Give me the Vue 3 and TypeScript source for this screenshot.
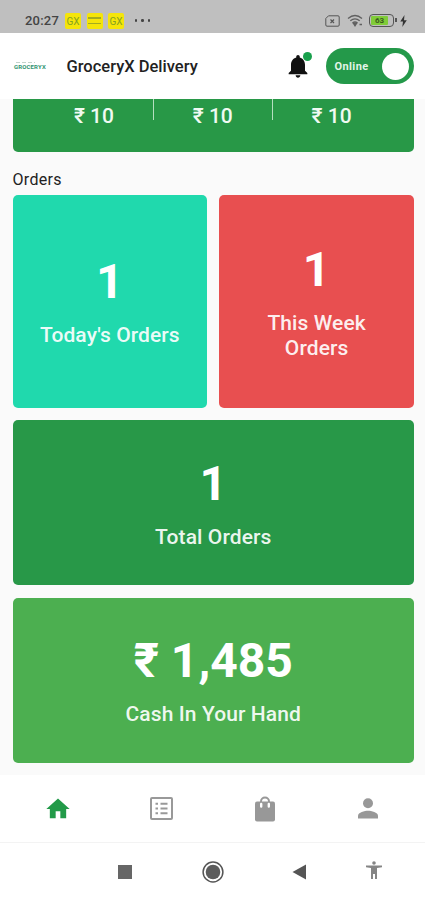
<script setup lang="ts">
import { ref } from 'vue'

interface OrderCard {
  value: string
  label: string
  tone: string
}

const earnings: string[] = ['₹ 10', '₹ 10', '₹ 10']
const cards: OrderCard[] = [
  { value: '1', label: "Today's Orders", tone: 'teal' },
  { value: '1', label: 'This Week Orders', tone: 'red' },
  { value: '1', label: 'Total Orders', tone: 'green wide' },
  { value: '₹ 1,485', label: 'Cash In Your Hand', tone: 'light wide' },
]
const online = ref(true)
</script>

<template>
  <div class="screen">
    <div class="status">
      <span class="time">20:27</span>
      <span class="badge">GX</span>
      <span class="badge lines"><i></i><i></i></span>
      <span class="badge">GX</span>
      <span class="dots"><i></i><i></i><i></i></span>
      <span class="status-right">
        <svg width="15" height="12" viewBox="0 0 15 12" fill="none" stroke="#555">
          <path d="M3.5 .8H13a1.2 1.2 0 0 1 1.2 1.2v8A1.2 1.2 0 0 1 13 11.2H2A1.2 1.2 0 0 1 .8 10V3.5z" />
          <path d="M5.5 4.5l3.5 3.5M9 4.5L5.5 8" stroke-width="1.2" />
        </svg>
        <svg class="wifi" width="17" height="13" viewBox="0 0 17 13" fill="none" stroke="#606060" stroke-width="1.3">
          <path d="M1 4.5Q8 -1.5 15 4.5M3.3 6.8Q8 2.8 12.7 6.8M5.5 9Q8 7 10.5 9" />
          <path d="M6.5 9.5h3L8 11.8zM12.5 10.5h2.5" fill="#606060" />
        </svg>
        <span class="battery"><b>63</b></span>
        <svg class="bolt" width="7" height="12" viewBox="0 0 7 12"><path d="M4.5 0L.3 6.6H3L2.3 12 6.8 5.2H4z" fill="#333" /></svg>
      </span>
    </div>

    <header class="header">
      <div class="logo"><i class="tagline"></i><span>GROCERYX</span></div>
      <h1>GroceryX Delivery</h1>
      <div class="bell">
        <svg width="28" height="28" viewBox="0 0 24 24" fill="#111">
          <path d="M12 22c1.1 0 2-.9 2-2h-4c0 1.1.9 2 2 2zm6-6v-5c0-3.07-1.64-5.64-4.5-6.32V4c0-.83-.67-1.5-1.5-1.5s-1.5.67-1.5 1.5v.68C7.63 5.36 6 7.92 6 11v5l-2 2v1h16v-1l-2-2z" />
        </svg>
        <i class="dot"></i>
      </div>
      <button class="toggle" :class="{ off: !online }" @click="online = !online">
        <span>Online</span><i class="knob"></i>
      </button>
    </header>

    <main class="content">
      <section class="earnings">
        <div v-for="(amount, i) in earnings" :key="i" class="amount">{{ amount }}</div>
      </section>
      <h2>Orders</h2>
      <section class="grid">
        <article v-for="card in cards" :key="card.label" class="card" :class="card.tone">
          <strong>{{ card.value }}</strong>
          <span>{{ card.label }}</span>
        </article>
      </section>
    </main>

    <nav class="tabs">
      <a>
        <svg width="28" height="28" viewBox="0 0 24 24" fill="#229a48"><path d="M10 20v-6h4v6h5v-8h3L12 3 2 12h3v8z" /></svg>
      </a>
      <a>
        <svg width="23" height="23" viewBox="0 0 23 23" fill="none" stroke="#999">
          <rect x="1" y="1" width="21" height="21" rx="1" stroke-width="2" />
          <path d="M5.5 6.7h2.5M5.500 11.500h2.500M5.500 16.300h2.500M10.500 6.700h7M10.500 11.500h7M10.500 16.300h7" stroke-width="1.900" />
        </svg>
      </a>
      <a>
        <svg width="20" height="26" viewBox="0 0 20 26">
          <rect x="0" y="5.500" width="20" height="20" rx="2" fill="#989898" />
          <path d="M6 7V5.500a4 4 0 0 1 8 0V7" fill="none" stroke="#989898" stroke-width="2" />
          <path d="M6.200 8v2.500M13.800 8v2.500" stroke="#fff" stroke-width="2.400" stroke-linecap="round" />
        </svg>
      </a>
      <a>
        <svg width="20" height="21" viewBox="0 0 20 21" fill="#989898">
          <circle cx="10" cy="5.200" r="5" />
          <path d="M0 20.500v-2.800c0-3.300 6.700-5 10-5s10 1.700 10 5v2.800z" />
        </svg>
      </a>
    </nav>

    <footer class="system">
      <svg width="14" height="14" viewBox="0 0 14 14"><rect width="14" height="14" fill="#666" /></svg>
      <svg width="22" height="22" viewBox="0 0 22 22">
        <circle cx="11" cy="11" r="9.900" fill="none" stroke="#555" stroke-width="1.500" />
        <circle cx="11" cy="11" r="7.300" fill="#5c5c5c" />
      </svg>
      <svg width="14" height="16" viewBox="0 0 14 16"><path d="M14 .5v15L.5 8z" fill="#555" /></svg>
      <svg class="access" width="16" height="18" viewBox="0 0 16 18" fill="#858585">
        <circle cx="8" cy="2" r="1.800" />
        <path d="M0 4.500h16v1.800l-5 .7v11H9v-5H7v5H5V7L0 6.300z" />
      </svg>
    </footer>
  </div>
</template>

<style>
body {
  margin: 0;
}
</style>

<style scoped>
* {
  box-sizing: border-box;
}
.screen {
  width: 425px;
  height: 900px;
  display: flex;
  flex-direction: column;
  overflow: hidden;
  background: #fff;
  font-family: Roboto, "Liberation Sans", sans-serif;
}
.status {
  height: 33px;
  flex: none;
  display: flex;
  align-items: center;
  padding: 8px 18px 0 25px;
  background: #bfbfbf;
}
.time {
  width: 40px;
  font-size: 13px;
  font-weight: 500;
  letter-spacing: 0.2px;
  color: #444;
}
.badge {
  width: 16px;
  height: 16px;
  margin-right: 5.5px;
  border-radius: 2px;
  background: #f5e50a;
  color: #85a321;
  font-size: 10px;
  line-height: 17px;
  text-align: center;
}
.lines {
  display: flex;
  flex-direction: column;
  align-items: center;
  justify-content: center;
  gap: 4px;
}
.lines i {
  width: 13px;
  height: 1.5px;
  background: #a4ac20;
}
.dots {
  display: flex;
  gap: 4px;
  margin-left: 5px;
}
.dots i {
  width: 2.5px;
  height: 2.5px;
  border-radius: 50%;
  background: #444;
}
.status-right {
  display: flex;
  align-items: center;
  margin-left: auto;
}
.wifi {
  margin-left: 7px;
}
.battery {
  position: relative;
  width: 25px;
  height: 13px;
  margin-left: 5px;
  padding: 1px;
  border: 1.5px solid #555;
  border-radius: 4px;
}
.battery::after {
  content: "";
  position: absolute;
  right: -4px;
  top: 3px;
  width: 2px;
  height: 4px;
  background: #555;
}
.battery b {
  display: block;
  width: 17px;
  height: 9px;
  border-radius: 1px;
  background: #80cc38;
  color: #3c5d1d;
  font-size: 8px;
  line-height: 9px;
  text-align: center;
}
.bolt {
  margin-left: 6px;
}
.header {
  height: 66px;
  flex: none;
  display: flex;
  align-items: center;
  padding: 0 11px 0 14px;
}
.logo {
  width: 52.5px;
  display: flex;
  flex-direction: column;
  gap: 1px;
  color: #2f9470;
  font-size: 6px;
  font-weight: 700;
  line-height: 6px;
  letter-spacing: 0.15px;
}
.tagline {
  width: 19px;
  height: 1px;
  margin-left: 2px;
  background: repeating-linear-gradient(90deg, #c3d3cc 0 4px, transparent 4px 6px);
}
h1 {
  margin: 0;
  font-size: 16.5px;
  font-weight: 500;
  color: #222;
}
.bell {
  position: relative;
  width: 28px;
  height: 28px;
  margin-left: auto;
}
.dot {
  position: absolute;
  top: 0;
  right: 0;
  width: 9px;
  height: 9px;
  border-radius: 50%;
  background: #18a04c;
}
.toggle {
  width: 88.5px;
  height: 36px;
  margin-left: 14px;
  padding: 0 5px 0 9px;
  display: flex;
  align-items: center;
  justify-content: space-between;
  border: 0;
  border-radius: 18px;
  background: #24994a;
  color: #e3f5e8;
  font: 700 11px Roboto, sans-serif;
  letter-spacing: 0.4px;
}
.off {
  background: #999;
}
.knob {
  width: 27px;
  height: 27px;
  border-radius: 50%;
  background: #fff;
}
.content {
  height: 676px;
  flex: none;
  padding: 0 11px 0 12.5px;
  background: #fafafa;
}
.earnings {
  height: 53px;
  display: flex;
  padding: 0 23.5px 0 22.5px;
  background: #289847;
  border-radius: 0 0 5px 5px;
}
.amount {
  flex: 1;
  height: 21px;
  padding-top: 4px;
  line-height: 26px;
  text-align: center;
  color: #f0faf2;
  font-size: 21px;
  font-weight: 500;
}
.amount + .amount {
  border-left: 1.5px solid #b5dfc0;
}
h2 {
  height: 43px;
  margin: 0;
  padding-top: 18px;
  font-size: 16px;
  line-height: 19px;
  font-weight: 400;
  letter-spacing: 0.3px;
  color: #222;
}
.grid {
  display: grid;
  grid-template-columns: 1fr 1fr;
  grid-template-rows: 212.5px 165px 165px;
  gap: 12.5px 12px;
}
.card {
  display: flex;
  flex-direction: column;
  align-items: center;
  justify-content: center;
  gap: 13px;
  padding: 0 27px;
  border-radius: 5px;
  color: #fff;
  text-align: center;
}
.card strong {
  font-size: 48px;
  line-height: 56px;
  font-weight: 700;
}
.card span {
  font-size: 21px;
  line-height: 25px;
  font-weight: 500;
  letter-spacing: 0.1px;
  color: rgba(255, 255, 255, 0.93);
}
.wide {
  grid-column: span 2;
}
.teal {
  background: #20d9ad;
}
.red {
  background: #e84f50;
}
.green {
  background: #289848;
}
.light {
  background: #4caf50;
}
.tabs {
  height: 68px;
  flex: none;
  display: grid;
  grid-template-columns: repeat(4, 103.5px);
  padding-left: 6px;
  border-bottom: 1px solid #f3f3f3;
}
.tabs a {
  display: flex;
  align-items: center;
  justify-content: center;
}
.system {
  flex: 1;
  display: grid;
  grid-template-columns: 88px 88px 84px 64px;
  align-items: center;
  justify-items: center;
  padding: 0 0 0 81px;
}
.access {
  margin: 0 0 3px 1px;
}
</style>
